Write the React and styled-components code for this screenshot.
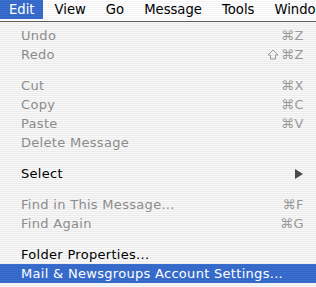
import React from 'react'
import styled, { createGlobalStyle } from 'styled-components';

const GlobalStyle = createGlobalStyle`
    html, body {
        margin: 0;
        padding: 0;
        background: #fff;
    }
    body {
        font-family: "DejaVu Sans", "Liberation Sans", sans-serif;
        font-size: 13px;
    }
`;

const titles = ['Edit', 'View', 'Go', 'Message', 'Tools', 'Window'];

const groups = [
    [
        { label: 'Undo', keys: '⌘Z', disabled: true },
        { label: 'Redo', keys: '⌘Z', shift: true, disabled: true },
    ],
    [
        { label: 'Cut', keys: '⌘X', disabled: true },
        { label: 'Copy', keys: '⌘C', disabled: true },
        { label: 'Paste', keys: '⌘V', disabled: true },
        { label: 'Delete Message', disabled: true },
    ],
    [
        { label: 'Select', submenu: true },
    ],
    [
        { label: 'Find in This Message...', keys: '⌘F', disabled: true },
        { label: 'Find Again', keys: '⌘G', disabled: true },
    ],
    [
        { label: 'Folder Properties...' },
        { label: 'Mail & Newsgroups Account Settings...', selected: true },
    ],
];

// outlined shift arrow, the font one is too thin
const ShiftIcon = () => (
    <svg width="12" height="11" viewBox="0 0 12 11">
        <path d="M6 1 L11 6 H8.5 V10 H3.5 V6 H1 Z" fill="none" stroke="currentColor" strokeWidth="1" strokeLinejoin="miter" />
    </svg>
)

function App() {
  return (
        <Screen>
            <GlobalStyle />
            <MenuBar>
                {titles.map((t, i) => (
                    <MenuTitle key={t} $active={i === 0}>{t}</MenuTitle>
                ))}
            </MenuBar>
            <Menu>
                {groups.map((group, gi) => (
                    <React.Fragment key={gi}>
                        {gi > 0 && <Separator />}
                        {group.map((item) => (
                            <Item key={item.label} $disabled={item.disabled} $selected={item.selected}>
                                <Label>{item.label}</Label>
                                {item.keys && (
                                    <Shortcut>
                                        {item.shift && <ShiftIcon />}
                                        {item.keys}
                                    </Shortcut>
                                )}
                                {item.submenu && <Arrow />}
                            </Item>
                        ))}
                    </React.Fragment>
                ))}
            </Menu>
        </Screen>
  )
}

const stripes = `repeating-linear-gradient(to bottom, #f9f9f9 0px, #f9f9f9 1px, #ebebeb 1px, #ebebeb 2px)`;
const blue = `repeating-linear-gradient(to bottom, #3a6fd0 0px, #3a6fd0 1px, #3366c4 1px, #3366c4 2px)`;

const Screen = styled.div`
    width: 316px;
    height: 287px;
    overflow: hidden;
    background: ${stripes};
`;
const MenuBar = styled.div`
    display: flex;
    height: 21px;
    border-bottom: 1px solid #5a5a5a;
    background: repeating-linear-gradient(to bottom, #ffffff 0px, #ffffff 1px, #f2f2f2 1px, #f2f2f2 2px);
    white-space: nowrap;
    overflow: hidden;
`;
const MenuTitle = styled.div`
    display: flex;
    align-items: center;
    flex-shrink: 0;
    height: 19px;
    padding: 0 8px 0 9px;
    margin-right: 3px;
    font-size: 13.2px;
    color: ${p => p.$active ? '#fff' : '#000'};
    background: ${p => p.$active ? blue : 'transparent'};
`;
const Menu = styled.div`
    display: flex;
    flex-direction: column;
    padding-top: 4px;
`;
const Item = styled.div`
    display: flex;
    align-items: center;
    justify-content: space-between;
    height: 19px;
    padding: 0 12px 0 21px;
    color: ${p => p.$selected ? '#fff' : p.$disabled ? '#8c8c8c' : '#000'};
    background: ${p => p.$selected ? blue : 'transparent'};
    white-space: nowrap;
`;
const Label = styled.span`
    letter-spacing: 0.3px;
`;
const Shortcut = styled.span`
    display: flex;
    align-items: center;
    gap: 2px;
    color: #999;
    letter-spacing: 0.5px;
`;
const Arrow = styled.span`
    width: 0;
    height: 0;
    margin-right: 1px;
    border-top: 5px solid transparent;
    border-bottom: 5px solid transparent;
    border-left: 8px solid #4a4a4a;
`;
const Separator = styled.div`
    height: 12px;
`;

export default App
